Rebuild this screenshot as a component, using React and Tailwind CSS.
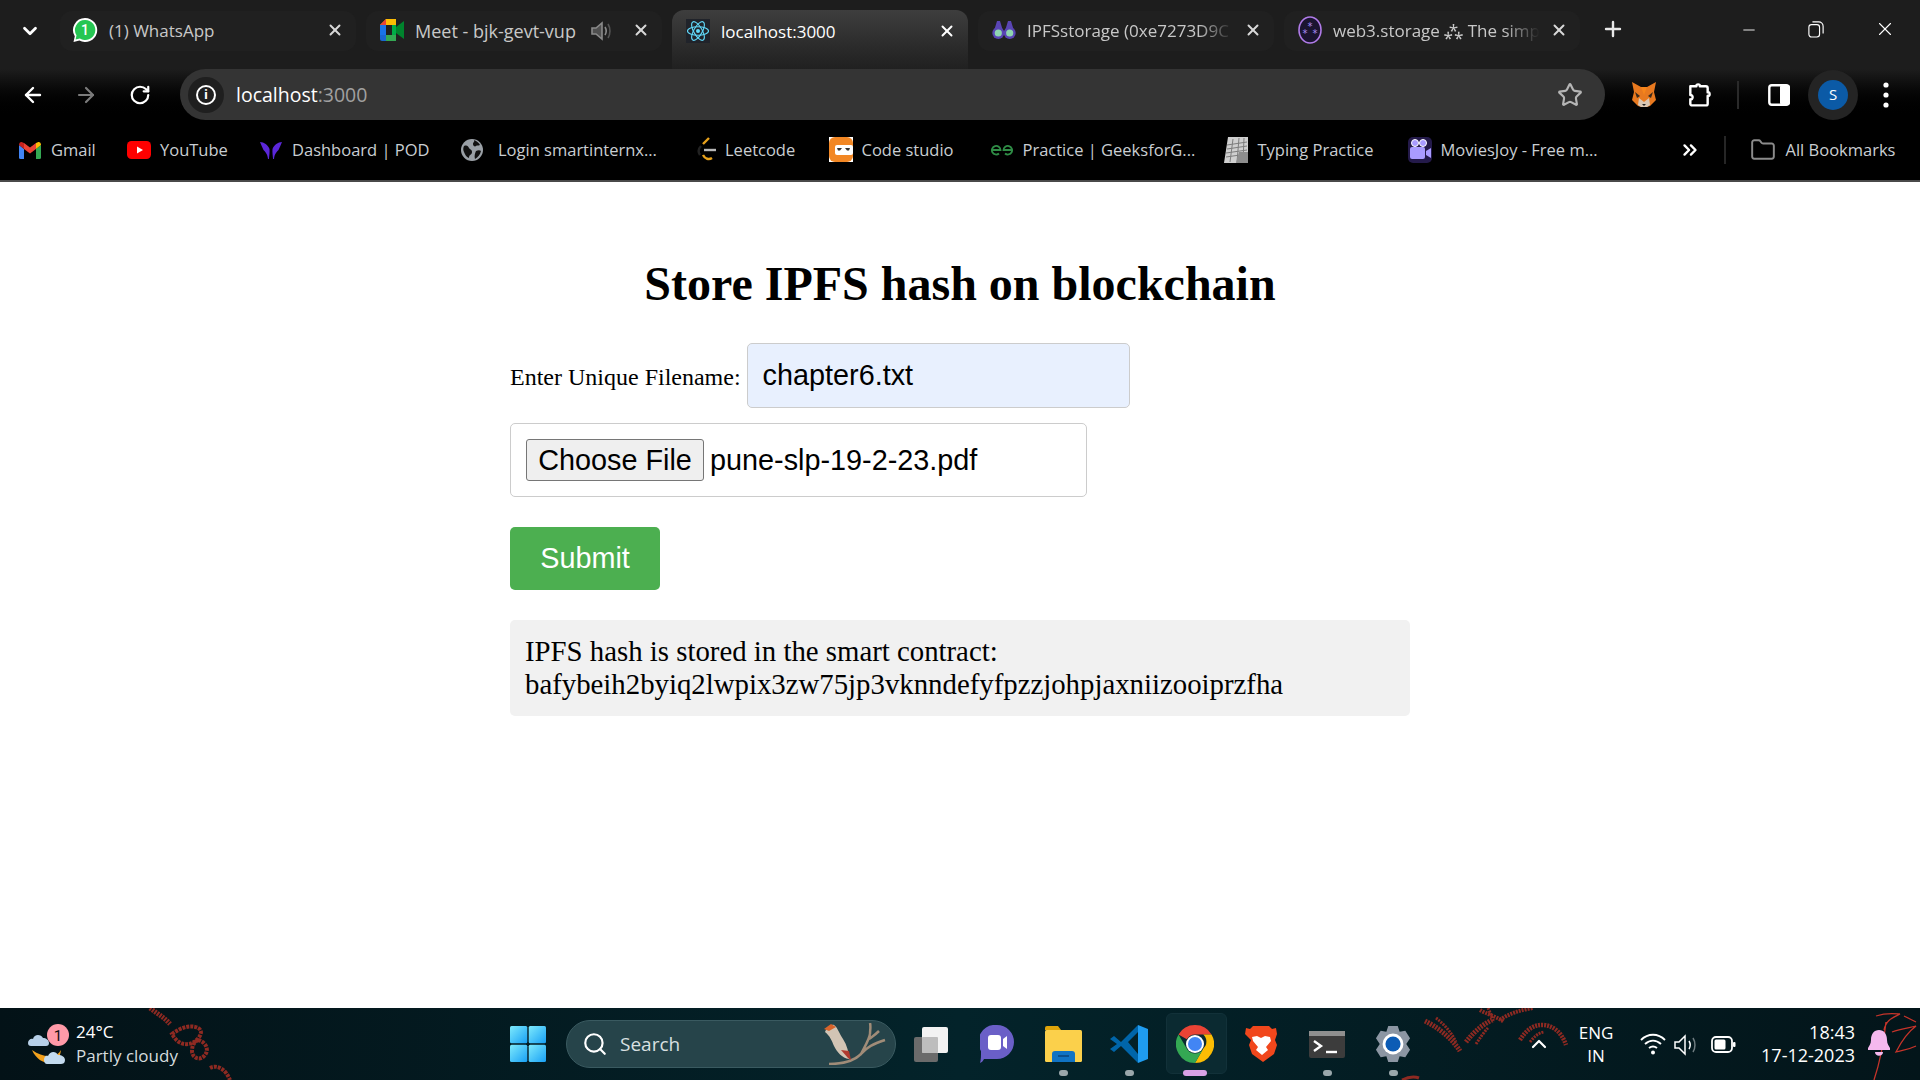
import { ArrowLeft, ArrowRight, RotateCw, X, Plus, Star, ChevronDown, ChevronUp, ChevronsRight, Folder, Search, Minus } from "lucide-react";

function WhatsAppIcon() {
  return (
    <svg width="26" height="26" viewBox="0 0 26 26" className="-ml-[2px]">
      <path d="M13 1a12 12 0 0 0-10.2 18.3L1.5 25l5.9-1.5A12 12 0 1 0 13 1z" fill="#fff" />
      <path d="M13 3a10 10 0 0 0-8.5 15.3l-.9 4.2 4.3-1.1A10 10 0 1 0 13 3z" fill="#25c652" />
      <text x="13" y="18" textAnchor="middle" fontSize="14" fontFamily="Roboto" fontWeight="500" fill="#fff">1</text>
    </svg>
  );
}

function MeetIcon() {
  return (
    <svg width="24" height="22" viewBox="0 0 24 22">
      <path d="M6 0h10v6H6v3H0V6z" fill="#fbbc04" />
      <path d="M0 6h6v10H0z" fill="#1a73e8" />
      <path d="M0 16h6v6H2a2 2 0 0 1-2-2z" fill="#1967d2" />
      <path d="M6 16h10v6H6z" fill="#34a853" />
      <path d="M16 1v7l-4 3h4v11a2 2 0 0 0 0 0l0-8 8 6V2l-8 6V1z" fill="#00832d" />
      <path d="M0 6l6-6v6z" fill="#ea4335" />
      <path d="M16 6v10h-4V6z" fill="#00ac47" />
    </svg>
  );
}

function ReactIcon() {
  return (
    <svg width="24" height="24" viewBox="-12 -12 24 24" fill="none" stroke="#61dafb" strokeWidth="1.1">
      <rect x="-12" y="-12" width="24" height="24" fill="#20232a" stroke="none" />
      <circle r="2" fill="#61dafb" stroke="none" />
      <ellipse rx="10.5" ry="4.2" />
      <ellipse rx="10.5" ry="4.2" transform="rotate(60)" />
      <ellipse rx="10.5" ry="4.2" transform="rotate(120)" />
    </svg>
  );
}

function BinocularsIcon() {
  return (
    <svg width="24" height="24" viewBox="0 0 24 24">
      <path d="M2 13 5 3h3l3 10zM13 13l3-10h3l3 10z" fill="#5a45b5" />
      <circle cx="6.3" cy="15" r="6" fill="#5a45b5" />
      <circle cx="17.7" cy="15" r="6" fill="#5a45b5" />
      <circle cx="6.3" cy="15" r="3.6" fill="#8fd5b0" />
      <circle cx="17.7" cy="15" r="3.6" fill="#8fd5b0" />
    </svg>
  );
}

function Web3Icon() {
  return (
    <svg width="24" height="28" viewBox="0 0 24 28">
      <ellipse cx="12" cy="14" rx="11" ry="13" fill="#1b1430" stroke="#b07be8" strokeWidth="1.6" />
      <text x="12" y="14" textAnchor="middle" fontSize="10" fill="#a98bf0" fontFamily="DejaVu Sans">*</text>
      <text x="7" y="21" textAnchor="middle" fontSize="10" fill="#a98bf0" fontFamily="DejaVu Sans">*</text>
      <text x="17" y="21" textAnchor="middle" fontSize="10" fill="#a98bf0" fontFamily="DejaVu Sans">*</text>
    </svg>
  );
}

function TabSpeakerIcon() {
  return (
    <svg width="20" height="22" viewBox="0 0 20 22" fill="none" stroke="#8a8a8a" strokeWidth="1.6">
      <path d="M1 8h4l6-5v16l-6-5H1z" fill="#8a8a8a" fillOpacity="0.45" />
      <path d="M14 7c1.500 2.500 1.500 5.500 0 8" />
      <path d="M17 4c2.600 4 2.600 10 0 14" stroke="#555" />
    </svg>
  );
}

function TraySpeakerIcon() {
  return (
    <svg width="24" height="22" viewBox="0 0 24 22" fill="none" stroke="#fff" strokeWidth="1.500">
      <path d="M1 8h4l6-6v18l-6-6H1z" />
      <path d="M15 7c1.500 2.500 1.500 5.500 0 8" />
      <path d="M19 4c2.600 4 2.600 10 0 14" stroke="#6f7c80" />
    </svg>
  );
}

function Tab({ icon, title, active, audio, fade, wide }) {
  let titleClass = "ml-[11px] flex-1 overflow-hidden whitespace-nowrap text-[17px] leading-[26px]";
  if (fade) titleClass = "ml-[11px] flex-1 overflow-hidden whitespace-nowrap text-[17px] leading-[26px] [mask-image:linear-gradient(to_right,black_80%,transparent_97%)]";
  if (wide) titleClass = "ml-[11px] flex-1 overflow-hidden whitespace-nowrap text-[18px] leading-[26px]";
  return (
    <div
      className={
        active
          ? "w-[296px] h-[59px] mt-[10px] rounded-t-[12px] bg-gradient-to-b from-[#3e3e3e] to-[#202020] flex items-start pt-[9px] pl-[14px] pr-[11px] mx-[5px] text-white"
          : "w-[296px] h-[40px] mt-[11px] rounded-[12px] bg-[#202020] flex items-start pt-[7px] pl-[14px] pr-[11px] mx-[5px] text-[#c8c8c8]"
      }
    >
      <div className="w-[24px] h-[24px] shrink-0 flex items-center justify-center">{icon}</div>
      <span className={titleClass}>{title}</span>
      {audio && (
        <span className="mr-[17px] mt-[2px]">
          <TabSpeakerIcon />
        </span>
      )}
      <X className="w-[18px] h-[18px] mt-[3px] mr-[1px] ml-[4px] shrink-0" color={active ? "#ffffff" : "#d8d8d8"} strokeWidth={2.6} />
    </div>
  );
}

function GmailIcon() {
  return (
    <svg width="22" height="17" viewBox="0 0 22 17">
      <path d="M0 3v12.5A1.5 1.5 0 0 0 1.5 17H5V7z" fill="#4285f4" />
      <path d="M17 7v10h3.5a1.5 1.5 0 0 0 1.5-1.5V3z" fill="#34a853" />
      <path d="M5 7l6 4.5L17 7V1l-6 4.5L5 1z" fill="#ea4335" />
      <path d="M0 3l5 4V1L3.2.2C1.6-.5 0 .8 0 3z" fill="#c5221f" />
      <path d="M22 3l-5 4V1l1.8-.8C20.4-.5 22 .8 22 3z" fill="#fbbc04" />
    </svg>
  );
}

function YoutubeIcon() {
  return (
    <svg width="24" height="18" viewBox="0 0 24 18">
      <rect width="24" height="18" rx="4.5" fill="#f00" />
      <path d="M10 5.5v7l6-3.5z" fill="#fff" />
    </svg>
  );
}

function PodIcon() {
  return (
    <svg width="22" height="18" viewBox="0 0 22 18" fill="#5b27d9">
      <path d="M0 1c4 0 8 3 9.500 7 .3 3-.2 7-.6 10h-.9c-.5-5-2.500-7-4.500-9C2.300 6.500 1 3.500 0 1z" />
      <path d="M22 1c-4 0-8 3-9.500 7-.3 3 .2 7 .6 10h.9c.5-5 2.500-7 4.500-9 1.200-2.500 2.500-5.500 3.500-8z" />
    </svg>
  );
}

function GlobeIcon() {
  return (
    <svg width="22" height="22" viewBox="0 0 22 22">
      <circle cx="11" cy="11" r="11" fill="#9aa0a6" />
      <path d="M3 7c3-1 4 0 5 2s3 1 3 4-3 2-3 6c-3-1-4-4-5-6s-1-4 0-6zM13 1c3 1 5 3 6 5-2 1-3 0-4 1s-3 0-3-2 2-2 1-4zM15 12c2-1 4-1 5 0-1 4-3 6-6 8-1-3 0-6 1-8z" fill="#111" />
    </svg>
  );
}

function LeetcodeIcon() {
  return (
    <svg width="20" height="26" viewBox="0 0 20 26" fill="none" strokeWidth="2.400">
      <path d="M12 1 6 7" stroke="#e7a11b" />
      <path d="M6 18c2 4 6 5 9 3" stroke="#e7a11b" />
      <path d="M4 9c-3 3-3 6-1 9" stroke="#222" />
      <path d="M7 13h12" stroke="#b8b8b8" />
    </svg>
  );
}

function CodeStudioIcon() {
  return (
    <svg width="24" height="32" viewBox="0 0 24 32">
      <rect y="3" width="24" height="25" fill="#fff" />
      <rect y="3" width="24" height="25" rx="6" fill="#f28724" />
      <rect x="6" y="11" width="18" height="10" rx="2" fill="#fff" />
      <path d="M8 14h5l-2 2.500H9zM16 14h5l-1 2.500h-2z" fill="#333" />
    </svg>
  );
}

function GfgIcon() {
  return (
    <svg width="22" height="12" viewBox="0 0 22 12" fill="none" stroke="#2f8d46" strokeWidth="1.800">
      <path d="M1 6h8.500A4.300 4.300 0 1 0 8 9.500" />
      <path d="M21 6h-8.500A4.300 4.300 0 1 1 14 9.500" />
    </svg>
  );
}

function TypingIcon() {
  return (
    <svg width="24" height="26" viewBox="0 0 24 26">
      <path d="M4 0h20v26H0z" fill="#cfcfcf" />
      <path d="M3 8l20-3M3 12l20-3M2 16l21-3M2 20l21-3M9 2 6 25M15 1l-2 24M20 1l-1 24" stroke="#7d7d7d" strokeWidth="1" />
      <path d="M15 15h9v11h-12z" fill="#8d8d8d" />
    </svg>
  );
}

function MoviesIcon() {
  return (
    <svg width="24" height="26" viewBox="0 0 24 26">
      <rect width="24" height="26" rx="5" fill="#241a4a" />
      <circle cx="7" cy="6" r="3.500" fill="#a99bff" stroke="#fff" strokeWidth="1" />
      <circle cx="15" cy="6" r="3.500" fill="#a99bff" stroke="#fff" strokeWidth="1" />
      <rect x="2" y="10" width="15" height="12" rx="2" fill="#a99bff" />
      <path d="M18 14l5-3v10l-5-3z" fill="#a99bff" />
    </svg>
  );
}

function FoxIcon() {
  return (
    <svg width="26" height="26" viewBox="0 0 26 26">
      <path d="M1 0l9 5h6l9-5-2 10 2 8-6 6-3 1h-6l-3-1-6-6 2-8z" fill="#e8791f" />
      <path d="M8 16l5 4 5-4 1 7-3 2h-6l-3-2z" fill="#d9c6b3" />
      <path d="M4 10l5 4-3 2zM22 10l-5 4 3 2z" fill="#3a2a1c" />
      <path d="M10 5h6l-3 8z" fill="#f6851b" />
      <path d="M11 22h4l-2 2z" fill="#222" />
    </svg>
  );
}

function PuzzleIcon() {
  return (
    <svg width="26" height="26" viewBox="0 0 26 30" fill="none" stroke="#fff" strokeWidth="2.800" strokeLinejoin="round">
      <path d="M3 5h7c-1-3 5-3 4 0h7a2 2 0 0 1 2 2v5c3-1 3 5 0 4v9a2 2 0 0 1-2 2H5a2 2 0 0 1-2-2v-5c3 1 4-5 0-5z" />
    </svg>
  );
}

function SidePanelIcon() {
  return (
    <svg width="22" height="22" viewBox="0 0 22 22">
      <rect x="1.300" y="1.300" width="19.400" height="19.400" rx="2.500" fill="none" stroke="#fff" strokeWidth="2.400" />
      <rect x="12" y="1" width="10" height="20" rx="2" fill="#fff" />
    </svg>
  );
}

function Bookmark({ icon, label, cell, labelClass = "ml-[9px] whitespace-nowrap" }) {
  return (
    <div className={cell}>
      <div className="w-[24px] h-[32px] flex items-center justify-center shrink-0">{icon}</div>
      <span className={labelClass}>{label}</span>
    </div>
  );
}

function Wallpaper() {
  return (
    <svg className="absolute inset-0 w-full h-full" viewBox="0 0 1920 72" fill="none" stroke="#8e2a22">
      {/* chain on the left */}
      <path d="M150 0c6 5 14 9 20 16" strokeWidth="5" strokeDasharray="2 1" />
      <path d="M172 26c8-6 18-10 26-6 6 3 2 10-4 14-7 4-16 3-22-8z" strokeWidth="4" strokeDasharray="3 1" />
      <path d="M198 32c8 2 12 10 6 16-4 5-12 2-12-5 0-5 2-9 6-11z" strokeWidth="4" strokeDasharray="3 1" />
      <path d="M210 60c8-4 16 2 20 12" strokeWidth="4" strokeDasharray="3 1" />
      {/* palm */}
      <path d="M1425 13c12 6 26 16 35 30" strokeWidth="5" strokeDasharray="2 1" />
      <path d="M1436 10c8 6 15 14 20 24" strokeWidth="3" strokeDasharray="2 1" />
      <path d="M1466 34c6-8 14-16 26-22" strokeWidth="5" strokeDasharray="2 1" />
      <path d="M1476 36c4-6 8-12 12-16" strokeWidth="3" strokeDasharray="2 1" />
      <path d="M1480 2c6 4 16 6 24 12" strokeWidth="4" strokeDasharray="2 1" />
      <path d="M1500 12c8-6 20-10 33-12" strokeWidth="4" strokeDasharray="2 1" />
      <path d="M1488 0c2 4 4 10 6 14" strokeWidth="3" strokeDasharray="2 1" />
      <path d="M1520 32c6-10 14-16 24-15 10 1 18 8 22 20" strokeWidth="4.500" strokeDasharray="2 1" />
      <path d="M1530 34c4-5 8-9 14-10" strokeWidth="3" strokeDasharray="2 1" />
      <path d="M1402 72c6-3 12-4 17-2" strokeWidth="3" />
      {/* scribble behind the bell */}
      <path d="M1874 72c6-18 10-40 12-58M1876 8c12-4 22-2 24-2 -8 4-14 6-16 16M1892 24c10-4 18-4 24-6 -8 6-14 14-20 26 6-2 12-2 20-6M1904 8l12 6" strokeWidth="1.300" stroke="#c5342a" />
    </svg>
  );
}

function WeatherIcon() {
  return (
    <svg width="42" height="41" viewBox="0 0 42 41">
      <path d="M4 26c4 9 11 13 18 13 7-1 10-5 11-13-3 5-7 7-12 6-6 0-11-2-17-6z" fill="#f3a11c" />
      <path d="M0 19c0-3 3-5 5-4 1-5 8-5 10-1 3 0 6 2 6 5 0 2-1 3-3 3H3c-2 0-3-1-3-3z" fill="#b7d0e8" />
      <path d="M16 36c0-3 2-5 4-4 2-5 8-5 10-1 4 0 7 2 7 5 0 3-2 4-4 4H19c-2 0-3-2-3-4z" fill="#c3dbef" />
      <circle cx="30" cy="11" r="11" fill="#ff9aa8" />
      <text x="30" y="16.500" textAnchor="middle" fontSize="15" fontFamily="Roboto" fill="#111">1</text>
    </svg>
  );
}

function WindowsIcon() {
  return (
    <svg width="36" height="36" viewBox="0 0 36 36">
      <defs>
        <linearGradient id="winA" x1="0" y1="0" x2="1" y2="1">
          <stop offset="0" stopColor="#7eeafc" />
          <stop offset="1" stopColor="#18a0f5" />
        </linearGradient>
      </defs>
      <rect x="0" y="0" width="17.300" height="17.300" rx="1.500" fill="url(#winA)" />
      <rect x="18.700" y="0" width="17.300" height="17.300" rx="1.500" fill="url(#winA)" />
      <rect x="0" y="18.700" width="17.300" height="17.300" rx="1.500" fill="url(#winA)" />
      <rect x="18.700" y="18.700" width="17.300" height="17.300" rx="1.500" fill="url(#winA)" />
    </svg>
  );
}

function BirdIcon() {
  return (
    <svg width="64" height="42" viewBox="0 0 64 42" fill="none" className="mr-[8px]">
      <path d="M6 41c12 0 24-2 32-10 6-7 12-10 24-14M38 31c4-8 8-14 9-20M47 11c0-4 1-7 0-11M46 16c4-3 6-4 10-8" stroke="#a08c78" strokeWidth="2.500" />
      <path d="M2 9c2-5 6-8 9-7 4 3 5 8 9 14 4 6 6 14 6 20-7-1-12-7-15-13C9 18 7 13 2 9z" fill="#d2c4b4" />
      <path d="M1 6l7-5 5 3-7 4z" fill="#d9642b" />
      <path d="M18 27l7 8 3 2-2-9z" fill="#b03a2e" />
    </svg>
  );
}

function TaskViewIcon() {
  return (
    <svg width="36" height="36" viewBox="0 0 36 36">
      <rect x="1" y="11" width="24" height="25" rx="2" fill="#6b6b6b" />
      <rect x="9" y="1" width="26" height="26" rx="2" fill="#f2f2f2" />
      <rect x="9" y="11" width="16" height="16" rx="1" fill="#bdbdbd" />
    </svg>
  );
}

function MeetTaskbarIcon() {
  return (
    <svg width="34" height="38" viewBox="0 0 34 38">
      <path d="M17 0a17 17 0 0 1 0 34H4c-1 2-2 3-4 4 1-3 1-8 1-12A17 17 0 0 1 17 0z" fill="#6a5fc7" />
      <rect x="8" y="10" width="13" height="15" rx="3" fill="#fff" />
      <path d="M23 14l4-3v13l-4-3z" fill="#fff" />
    </svg>
  );
}

function ExplorerIcon() {
  return (
    <svg width="37" height="36" viewBox="0 0 37 36">
      <path d="M0 2a2 2 0 0 1 2-2h11l3 4h-16z" fill="#dfa40a" />
      <rect y="4" width="37" height="32" rx="1.500" fill="#fbd04b" />
      <path d="M7 36v-8a3 3 0 0 1 3-3h17a3 3 0 0 1 3 3v8z" fill="#1073c4" />
      <rect x="13" y="29" width="11" height="2" fill="#0b4f8c" />
    </svg>
  );
}

function VscodeIcon() {
  return (
    <svg width="38" height="38" viewBox="0 0 38 38">
      <path d="M28 0 38 4v30l-10 4z" fill="#1f9cf0" />
      <path d="M28 0 11 17 4 11 0 14l7 5-7 5 4 3 7-6 17 17 0-9-10-12 10-10z" fill="#0065a9" />
    </svg>
  );
}

function ChromeIcon() {
  return (
    <svg width="38" height="38" viewBox="0 0 38 38">
      <path d="M19 0a19 19 0 0 1 16.500 9.500H19a9.500 9.500 0 0 0-8.200 4.700L2.500 9.500A19 19 0 0 1 19 0z" fill="#ea4335" />
      <path d="M35.500 9.500a19 19 0 0 1-16.500 28.500l8.200-14.300a9.500 9.500 0 0 0 0-14.200z" fill="#fbbc04" />
      <path d="M19 38A19 19 0 0 1 2.500 9.500l8.300 14.200A9.500 9.500 0 0 0 27.200 23.700z" fill="#34a853" />
      <circle cx="19" cy="19" r="9" fill="#fff" />
      <circle cx="19" cy="19" r="7" fill="#4285f4" />
    </svg>
  );
}

function BraveIcon() {
  return (
    <svg width="32" height="36" viewBox="0 0 32 36">
      <path d="M8 0h16l3 3 4-1 1 6-2 6 2 5-3 9-11 8-11-8-3-9 2-5L0 8l1-6 4 1z" fill="#f1471c" />
      <path d="M7 11l5-1 4 2 4-2 5 1 1 4-5 6 2 3-6 5-6-5 2-3-5-6z" fill="#fff" />
    </svg>
  );
}

function TerminalIcon() {
  return (
    <svg width="36" height="27" viewBox="0 0 36 27">
      <rect width="36" height="27" rx="2" fill="#3c3c3c" />
      <rect width="36" height="5" fill="#8f8f8f" />
      <path d="M5 10l7 5-7 5" fill="none" stroke="#fff" strokeWidth="2.400" />
      <path d="M17 21h11" stroke="#fff" strokeWidth="2.400" />
    </svg>
  );
}

function SettingsIcon() {
  return (
    <svg width="36" height="36" viewBox="0 0 38 38">
      <path d="M14 0h10l2 6 6-1 5 8-4 6 4 6-5 8-6-1-2 6H14l-2-6-6 1-5-8 4-6-4-6 5-8 6 1z" fill="#8c96a3" />
      <circle cx="19" cy="19" r="11" fill="#fff" />
      <circle cx="19" cy="19" r="8" fill="#0c5cb5" />
    </svg>
  );
}

function WifiIcon() {
  return (
    <svg width="26" height="24" viewBox="0 0 26 24" fill="none" stroke="#fff" strokeWidth="1.900">
      <path d="M1 8c7-7 17-7 24 0M5 12c5-4.500 11-4.500 16 0M9 16c2.500-2 5.500-2 8 0" />
      <circle cx="13" cy="20.500" r="2" fill="#fff" stroke="none" />
    </svg>
  );
}

function BatteryIcon() {
  return (
    <svg width="25" height="17" viewBox="0 0 25 17">
      <rect x="1" y="1" width="20" height="15" rx="4" fill="none" stroke="#fff" strokeWidth="1.800" />
      <rect x="3.500" y="3.500" width="11" height="10" rx="1.500" fill="#fff" />
      <rect x="22" y="6" width="2.500" height="5" rx="1" fill="#fff" />
    </svg>
  );
}

function BellIcon() {
  return (
    <svg width="24" height="28" viewBox="0 0 24 28" fill="#f5b8ee">
      <path d="M12 0c5 0 8 4 8 10 0 4 2 6 3 8v2H1v-2c1-2 3-4 3-8C4 4 7 0 12 0z" />
      <path d="M8 22h8c0 5-8 5-8 0z" />
    </svg>
  );
}

function TaskIcon({ children, dot, active }) {
  return (
    <div className="w-[66px] h-[72px] flex justify-center relative pt-[16px]">
      {active && <div className="absolute left-[4px] top-[5px] w-[61px] h-[61px] rounded-[6px] bg-[#0b2a31] border border-[#123139]" />}
      <div className="relative flex flex-col items-center">
        <div className="h-[40px] flex items-center">{children}</div>
        {dot && <div className="w-[9px] h-[6px] rounded-full mt-[6px] bg-[#9aa7ab]" />}
        {active && <div className="w-[24px] h-[6px] rounded-full mt-[6px] bg-[#d8a1e6]" />}
      </div>
    </div>
  );
}

export default function App() {
  return (
    <div className="w-[1920px] h-[1080px] overflow-hidden flex flex-col bg-white font-['Liberation_Serif',serif]">
      <header className="h-[182px] shrink-0 border-b-2 border-[#4a4a4a] bg-black font-['Open_Sans',sans-serif]">
        <div className="h-[69px] bg-[#1d1d1d] flex">
          <div className="w-[55px] flex justify-center pt-[20px] pl-[4px]">
            <ChevronDown className="w-[22px] h-[22px]" color="#fff" strokeWidth={3} />
          </div>
          <Tab icon={<WhatsAppIcon />} title="(1) WhatsApp" />
          <Tab icon={<MeetIcon />} title="Meet - bjk-gevt-vup" audio wide />
          <Tab icon={<ReactIcon />} title="localhost:3000" active />
          <Tab icon={<BinocularsIcon />} title="IPFSstorage (0xe7273D9C" fade />
          <Tab icon={<Web3Icon />} title="web3.storage ⁂ The simp" fade />
          <div className="w-[40px] ml-[8px] pt-[11px]">
            <Plus className="w-[24px] h-[24px] ml-[8px] mt-[6px]" color="#e8e8e8" strokeWidth={2.4} />
          </div>
          <div className="flex-1 flex justify-end items-start pt-[17px] pr-[24px] gap-[50px]">
            <Minus className="w-[18px] h-[18px] mt-[4px]" color="#fff" strokeWidth={1.2} />
            <svg width="16" height="18" viewBox="0 0 18 20" fill="none" stroke="#fff" strokeWidth="1.300" className="mt-[3px]">
              <rect x="1" y="5" width="12" height="14" rx="3" />
              <path d="M5 2h7a5 5 0 0 1 5 5v8" />
            </svg>
            <X className="w-[22px] h-[22px] mt-[1px]" color="#fff" strokeWidth={1.2} />
          </div>
        </div>

        <div className="h-[51px] bg-gradient-to-b from-[#1d1d1d] to-black flex items-center">
          <div className="w-[180px] flex items-center pl-[21px] gap-[29px] shrink-0">
            <ArrowLeft className="w-[24px] h-[24px]" color="#fff" strokeWidth={2.4} />
            <ArrowRight className="w-[24px] h-[24px]" color="#7b7b7b" strokeWidth={2.2} />
            <RotateCw className="w-[22px] h-[22px] ml-[2px]" color="#fff" strokeWidth={2.4} />
          </div>
          <div className="w-[1425px] h-[51px] rounded-full bg-[#343434] flex items-center pl-[8px] pr-[22px] shrink-0">
            <div className="w-[36px] h-[36px] rounded-full bg-[#1f1f1f] flex items-center justify-center">
              <div className="w-[20px] h-[20px] rounded-full border-2 border-white flex items-center justify-center text-white text-[13px] font-bold leading-none">i</div>
            </div>
            <div className="ml-[12px] text-[19.5px] flex-1">
              <span className="text-white">localhost</span>
              <span className="text-[#a0a0a0]">:3000</span>
            </div>
            <Star className="w-[26px] h-[26px]" color="#b5b5b5" strokeWidth={2} />
          </div>
          <div className="flex-1 flex items-center pl-[26px]">
            <FoxIcon />
            <div className="ml-[29px]">
              <PuzzleIcon />
            </div>
            <div className="ml-[25px] w-[2px] h-[28px] bg-[#2a2a2a]" />
            <div className="ml-[29px]">
              <SidePanelIcon />
            </div>
            <div className="ml-[18px] w-[50px] h-[50px] rounded-full bg-[#242424] flex items-center justify-center">
              <div className="w-[30px] h-[30px] rounded-full bg-[#0b5aa6] text-white text-[15px] flex items-center justify-center">S</div>
            </div>
            <svg width="6" height="26" viewBox="0 0 6 26" fill="#fff" className="ml-[25px]">
              <circle cx="3" cy="3" r="2.600" />
              <circle cx="3" cy="13" r="2.600" />
              <circle cx="3" cy="23" r="2.600" />
            </svg>
          </div>
        </div>

        <div className="h-[60px] flex items-center pl-[18px] text-[16.5px] text-[#c9ced2]">
          <Bookmark icon={<GmailIcon />} label="Gmail" cell="w-[109px] flex items-center" />
          <Bookmark icon={<YoutubeIcon />} label="YouTube" cell="w-[132px] flex items-center" />
          <Bookmark icon={<PodIcon />} label="Dashboard | POD" cell="w-[201px] flex items-center" />
          <Bookmark icon={<GlobeIcon />} label="Login smartinternx..." cell="w-[235px] flex items-center" labelClass="ml-[14px] whitespace-nowrap" />
          <Bookmark icon={<LeetcodeIcon />} label="Leetcode" cell="w-[133.5px] flex items-center" labelClass="ml-[6px] whitespace-nowrap" />
          <Bookmark icon={<CodeStudioIcon />} label="Code studio" cell="w-[161px] flex items-center" />
          <Bookmark icon={<GfgIcon />} label="Practice | GeeksforG..." cell="w-[234px] flex items-center" />
          <Bookmark icon={<TypingIcon />} label="Typing Practice" cell="w-[184px] flex items-center" labelClass="ml-[10px] whitespace-nowrap" />
          <Bookmark icon={<MoviesIcon />} label="MoviesJoy - Free m..." cell="w-[271px] flex items-center" />
          <ChevronsRight className="w-[22px] h-[22px] shrink-0" color="#fff" strokeWidth={2.6} />
          <div className="ml-[23px] w-[2px] h-[28px] bg-[#262626] shrink-0" />
          <Folder className="ml-[24px] w-[26px] h-[26px] shrink-0" color="#8b8b8b" strokeWidth={1.8} />
          <span className="ml-[10px] whitespace-nowrap">All Bookmarks</span>
        </div>
      </header>

      <main className="flex-1 bg-white">
        <div className="w-[900px] mx-auto text-black">
          <h1 className="text-[48px] font-bold text-center leading-[54px] pt-[75px]">Store IPFS hash on blockchain</h1>
          <div className="flex items-center mt-[32px]">
            <label className="text-[24px] pt-[2px]">Enter Unique Filename:</label>
            <div className="ml-[6px] w-[383px] h-[65px] rounded-[5px] border border-[#ccc] bg-[#e8f0fe] flex items-center pl-[15px] text-[28.8px] font-['Liberation_Sans',sans-serif]">
              chapter6.txt
            </div>
          </div>
          <div className="mt-[15px] w-[577px] h-[74px] rounded-[5px] border border-[#ccc] flex items-center pl-[15px] text-[28.8px] font-['Liberation_Sans',sans-serif]">
            <button className="w-[178px] h-[42px] rounded-[3px] border border-[#767676] bg-[#efefef] leading-[38px]">Choose File</button>
            <span className="ml-[6px] pt-[1px]">pune-slp-19-2-23.pdf</span>
          </div>
          <button className="block mt-[30px] w-[150px] h-[63px] rounded-[5px] bg-[#4caf50] text-white text-[28.8px] font-['Liberation_Sans',sans-serif]">Submit</button>
          <div className="mt-[30px] h-[96px] rounded-[5px] bg-[#f1f1f1] px-[15px] pt-[15px] text-[28.8px] leading-[33px]">
            <p>IPFS hash is stored in the smart contract:</p>
            <p>bafybeih2byiq2lwpix3zw75jp3vknndefyfpzzjohpjaxniizooiprzfha</p>
          </div>
        </div>
      </main>

      <footer className="h-[72px] shrink-0 relative bg-gradient-to-r from-[#031217] via-[#03232a] to-[#03151a] text-white font-['Open_Sans',sans-serif]">
        <Wallpaper />
        <div className="relative h-full flex items-center">
          <div className="w-[510px] shrink-0 flex items-center pl-[28px]">
            <WeatherIcon />
            <div className="ml-[6px] text-[17px] leading-[24px]">
              <div>24°C</div>
              <div className="text-[#d5dcde]">Partly cloudy</div>
            </div>
          </div>
          <WindowsIcon />
          <div className="ml-[20px] w-[330px] h-[48px] rounded-full bg-[#26444a] border border-[#3a5a60] flex items-center pl-[15px] shrink-0 overflow-hidden">
            <Search className="w-[26px] h-[26px]" color="#fff" strokeWidth={2} />
            <span className="ml-[12px] text-[19px] text-[#d9e0e1] flex-1">Search</span>
            <BirdIcon />
          </div>
          <div className="ml-[2px] flex">
            <TaskIcon><TaskViewIcon /></TaskIcon>
            <TaskIcon><MeetTaskbarIcon /></TaskIcon>
            <TaskIcon dot><ExplorerIcon /></TaskIcon>
            <TaskIcon dot><VscodeIcon /></TaskIcon>
            <TaskIcon active><ChromeIcon /></TaskIcon>
            <TaskIcon><BraveIcon /></TaskIcon>
            <TaskIcon dot><TerminalIcon /></TaskIcon>
            <TaskIcon dot><SettingsIcon /></TaskIcon>
          </div>
          <ChevronUp className="ml-[101px] w-[24px] h-[24px] shrink-0" color="#fff" strokeWidth={2.2} />
          <div className="ml-[24px] w-[42px] text-center text-[17px] leading-[23px]">
            <div>ENG</div>
            <div>IN</div>
          </div>
          <div className="ml-[23px]">
            <WifiIcon />
          </div>
          <div className="ml-[8px] mt-[2px]">
            <TraySpeakerIcon />
          </div>
          <div className="ml-[13px]">
            <BatteryIcon />
          </div>
          <div className="ml-[23px] w-[96px] text-right text-[18px] leading-[23px] whitespace-nowrap">
            <div>18:43</div>
            <div>17-12-2023</div>
          </div>
          <div className="ml-[12px]">
            <BellIcon />
          </div>
        </div>
      </footer>
    </div>
  );
}
